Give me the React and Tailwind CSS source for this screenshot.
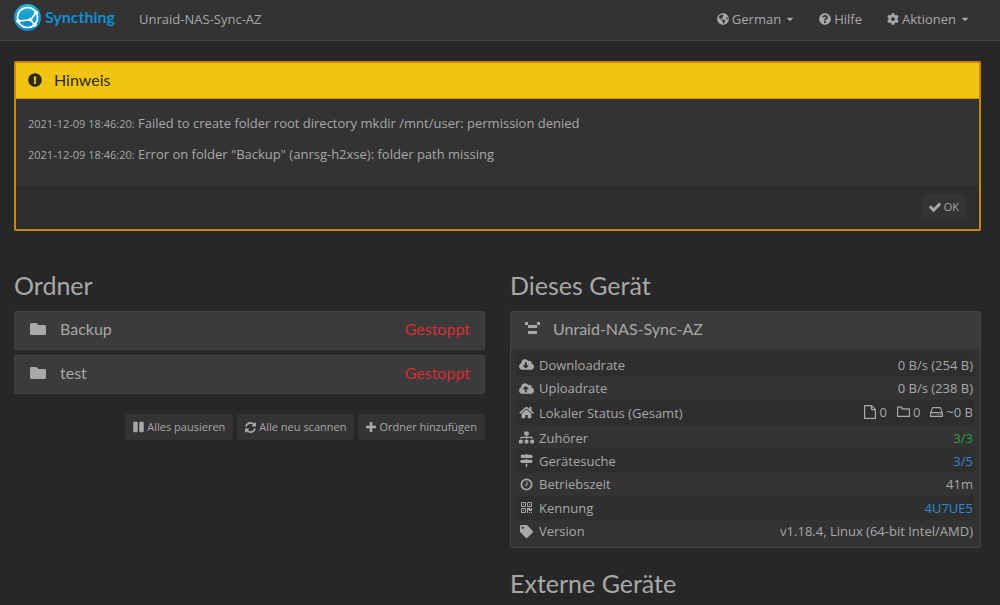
import {
  FaCaretDown,
  FaCloudDownloadAlt,
  FaCloudUploadAlt,
  FaCog,
  FaExclamationCircle,
  FaFolder,
  FaGlobeAmericas,
  FaHome,
  FaMapSigns,
  FaPause,
  FaQuestionCircle,
  FaSitemap,
  FaTag,
} from 'react-icons/fa';

const notices = [
  { time: '2021-12-09 18:46:20:', text: 'Failed to create folder root directory mkdir /mnt/user: permission denied' },
  { time: '2021-12-09 18:46:20:', text: 'Error on folder "Backup" (anrsg-h2xse): folder path missing' },
];

const folders = [
  { name: 'Backup', status: 'Gestoppt' },
  { name: 'test', status: 'Gestoppt' },
];

const deviceRows = [
  { icon: FaCloudDownloadAlt, label: 'Downloadrate', value: '0 B/s (254 B)' },
  { icon: FaCloudUploadAlt, label: 'Uploadrate', value: '0 B/s (238 B)' },
  { icon: FaHome, label: 'Lokaler Status (Gesamt)', value: <LocalState /> },
  { icon: FaSitemap, label: 'Zuhörer', value: <span className="text-[#29a745]">3/3</span> },
  { icon: FaMapSigns, label: 'Gerätesuche', value: <a href="#discovery" className="text-[#3089d6]">3/5</a> },
  { icon: ClockIcon, label: 'Betriebszeit', value: '41m' },
  { icon: QrIcon, label: 'Kennung', value: <a href="#id" className="text-[#3089d6]">4U7UE5</a> },
  { icon: FaTag, label: 'Version', value: 'v1.18.4, Linux (64-bit Intel/AMD)' },
];

function Logo() {
  return (
    <svg viewBox="0 0 117 117" className="h-[27px] w-[27px]" aria-hidden="true">
      <defs>
        <linearGradient id="logo-bg" x1="0" y1="1" x2="0" y2="0">
          <stop offset="0" stopColor="#0882c8" />
          <stop offset="1" stopColor="#26b6db" />
        </linearGradient>
      </defs>
      <circle cx="58.5" cy="58.5" r="58.5" fill="url(#logo-bg)" />
      <g fill="none" stroke="#fff" strokeWidth="7">
        <circle cx="58.5" cy="58.5" r="43.5" />
        <path d="M72 68 L95 38 M72 68 L18 74 M72 68 L90 91" />
      </g>
      <g fill="#fff">
        <circle cx="72" cy="68" r="8" />
        <circle cx="96" cy="38" r="9" />
        <circle cx="18" cy="74" r="9" />
        <circle cx="90" cy="90" r="9" />
      </g>
    </svg>
  );
}

function CheckIcon() {
  return (
    <svg viewBox="121 246 1550 1276" className="h-[10px] w-[12px]" fill="currentColor" aria-hidden="true">
      <path d="M1671 566q0 40-28 68l-724 724-136 136q-28 28-68 28t-68-28l-136-136-362-362q-28-28-28-68t28-68l136-136q28-28 68-28t68 28l294 295 656-657q28-28 68-28t68 28l136 136q28 28 28 68z" />
    </svg>
  );
}

function PlusIcon() {
  return (
    <svg viewBox="192 128 1408 1408" className="h-[10px] w-[10px]" fill="currentColor" aria-hidden="true">
      <path d="M1600 736v192q0 40-28 68t-68 28h-416v416q0 40-28 68t-68 28h-192q-40 0-68-28t-28-68v-416h-416q-40 0-68-28t-28-68v-192q0-40 28-68t68-28h416v-416q0-40 28-68t68-28h192q40 0 68 28t28 68v416h416q40 0 68 28t28 68z" />
    </svg>
  );
}

function RefreshIcon() {
  return (
    <svg viewBox="0 0 1536 1536" className="h-[11px] w-[11px]" fill="currentColor" aria-hidden="true">
      <path d="M1511 928q0 5-1 7-64 268-268 434.500T764 1536q-146 0-282.500-55T238 1324l-129 129q-19 19-45 19t-45-19-19-45V960q0-26 19-45t45-19h448q26 0 45 19t19 45-19 45l-137 137q71 66 161 102t187 36q134 0 250-65t186-179q11-17 53-117 8-23 30-23h192q13 0 22.500 9.500t9.500 22.500zm25-800v448q0 26-19 45t-45 19h-448q-26 0-45-19t-19-45 19-45l138-138Q969 256 768 256q-134 0-250 65T332 500q-11 17-53 117-8 23-30 23H50q-13 0-22.500-9.500T18 608v-7q65-268 270-434.500T768 0q146 0 284 55.500T1297 212l130-129q19-19 45-19t45 19 19 45z" />
    </svg>
  );
}

function ClockIcon({ className }) {
  return (
    <svg viewBox="0 0 14 14" className={className} fill="none" stroke="currentColor" aria-hidden="true">
      <circle cx="7" cy="7" r="5.500" strokeWidth="1.900" />
      <path d="M7.500 4v3.500H5" strokeWidth="1.200" />
    </svg>
  );
}

function QrIcon({ className }) {
  return (
    <svg viewBox="0 0 13 13" className={className} aria-hidden="true">
      <path d="M1.500 1.500h4v4h-4zM7.500 1.500h4v4h-4zM1.500 7.500h4v4h-4z" fill="none" stroke="currentColor" />
      <path d="M3 3h1v1H3zM9 3h1v1H9zM3 9h1v1H3zM7 7h3v1h1V7h1v3H9V9H8v3H7zM9 11h1v1H9zM11 11h1v1h-1z" fill="currentColor" />
    </svg>
  );
}

function FileIcon() {
  return (
    <svg viewBox="0 0 12 14" className="h-[14px] w-[12px]" fill="none" stroke="currentColor" strokeWidth="1.200" strokeLinejoin="round" aria-hidden="true">
      <path d="M.6.6h7L11.400 4.400v9H.6zM7.500.6v4h3.900" />
    </svg>
  );
}

function FolderIcon() {
  return (
    <svg viewBox="0 0 13 12" className="h-[12px] w-[13px]" fill="none" stroke="currentColor" strokeWidth="1.200" strokeLinejoin="round" aria-hidden="true">
      <path d="M.6 1.200h4.200v1.600h7.600v7.600H.6z" />
    </svg>
  );
}

function DiskIcon() {
  return (
    <svg viewBox="0 0 13 12" className="h-[12px] w-[13px]" fill="none" stroke="currentColor" strokeWidth="1.200" strokeLinejoin="round" aria-hidden="true">
      <path d="M.6 6.600 2.600 1.600h7.800l2 5v3.800H.6zM.6 6.600h11.800M7.500 8.500h1M9.800 8.500h1" />
    </svg>
  );
}

// Small pixel figure shown in front of the device name
function Identicon() {
  return (
    <svg viewBox="0 0 5 5" className="h-[15px] w-[15px]" fill="currentColor" shapeRendering="crispEdges" aria-hidden="true">
      <path d="M0 0h1v1H0zM4 0h1v1H4zM1 1h3v1H1zM1 3h3v1H1z" />
    </svg>
  );
}

function LocalState() {
  return (
    <span className="inline-flex items-center gap-[10px]">
      <span className="flex items-center gap-[3px]"><FileIcon />0</span>
      <span className="flex items-center gap-[3px]"><FolderIcon />0</span>
      <span className="flex items-center gap-[3px]"><DiskIcon />~0 B</span>
    </span>
  );
}

function SmallButton({ icon, children }) {
  return (
    <button type="button" className="flex h-[26px] items-center gap-[3px] rounded-[3px] bg-[#333333] px-2 text-[11px]">
      {icon}
      {children}
    </button>
  );
}

function Navbar() {
  return (
    <nav className="flex h-[41px] items-center border-b border-[#424242] bg-[#333333] pr-[31px] pb-[2px] pl-[14px]">
      <a href="#home" className="flex items-center gap-1 pb-[4px] font-[Lato,sans-serif] text-[16px] font-bold text-[#0f8fd0]">
        <Logo />
        Syncthing
      </a>
      <p className="ml-[24px]">Unraid-NAS-Sync-AZ</p>
      <div className="ml-auto flex items-center gap-[25px]">
        <button type="button" className="flex items-center gap-[3px]">
          <FaGlobeAmericas className="h-[12px] w-[12px]" />
          German
          <FaCaretDown className="ml-[2px] h-[10px] w-[8px]" />
        </button>
        <a href="#help" className="flex items-center gap-[3px]">
          <FaQuestionCircle className="h-[12px] w-[12px]" />
          Hilfe
        </a>
        <button type="button" className="flex items-center gap-[3px]">
          <FaCog className="h-[12px] w-[12px]" />
          Aktionen
          <FaCaretDown className="ml-[2px] h-[10px] w-[8px]" />
        </button>
      </div>
    </nav>
  );
}

function Notice() {
  return (
    <section className="rounded-[2px] border-2 border-[#cb850f] bg-[#333333]">
      <h3 className="flex h-[36px] items-center gap-[12px] border-b border-[#d8940f] bg-[#f1c40f] px-3 pb-[2px] font-[Lato,sans-serif] text-[16px] text-[#2b2b20]">
        <FaExclamationCircle className="h-[14px] w-[14px]" />
        Hinweis
      </h3>
      <div className="flex flex-col gap-[11px] px-3 pt-[14px] pb-[22px]">
        {notices.map((n) => (
          <p key={n.text} className="leading-[20px]">
            <span className="text-[11px] leading-none">{n.time}</span> {n.text}
          </p>
        ))}
      </div>
      <div className="flex justify-end bg-[#2d2d2d] px-3 pt-2 pb-[9px]">
        <SmallButton icon={<CheckIcon />}>OK</SmallButton>
      </div>
    </section>
  );
}

function Folders() {
  return (
    <section>
      <h2 className="font-[Lato,sans-serif] text-[25px] leading-[26px]">Ordner</h2>
      <ul className="mt-[13px] flex flex-col gap-[5px]">
        {folders.map((f) => (
          <li key={f.name}>
            <button type="button" className="flex h-[39px] w-full items-center rounded-[2px] border border-[#444444] bg-[#3b3b3b] px-[14px] pb-[3px] font-[Lato,sans-serif] text-[16px]">
              <FaFolder className="mr-[14px] ml-[1px] h-[16px] w-[16px]" />
              {f.name}
              <span className="ml-auto text-[#d82c36]">{f.status}</span>
            </button>
          </li>
        ))}
      </ul>
      <div className="mt-5 flex justify-end gap-1">
        <SmallButton icon={<FaPause className="h-[12px] w-[11px]" />}>Alles pausieren</SmallButton>
        <SmallButton icon={<RefreshIcon />}>Alle neu scannen</SmallButton>
        <SmallButton icon={<PlusIcon />}>Ordner hinzufügen</SmallButton>
      </div>
    </section>
  );
}

function ThisDevice() {
  return (
    <section>
      <h2 className="font-[Lato,sans-serif] text-[25px] leading-[26px]">Dieses Gerät</h2>
      <div className="mt-[13px] rounded-[2px] border border-[#444444] bg-[#333333]">
        <h3 className="flex h-[37px] items-center gap-[13px] border-b border-[#3e3e3e] bg-[#3b3b3b] px-[14px] pb-[2px] font-[Lato,sans-serif] text-[16px]">
          <Identicon />
          Unraid-NAS-Sync-AZ
        </h3>
        <div className="px-[5px] pt-[4px] pb-[4px]">
          <table className="h-[190px] w-full">
            <tbody>
              {deviceRows.map(({ icon: Icon, label, value }) => (
                <tr key={label} className="odd:bg-[#2e2e2e]">
                  <th scope="row" className="px-[3px] py-0 text-left font-normal">
                    <span className="flex items-center gap-[5px]">
                      <Icon className="h-[13px] w-[15px]" />
                      {label}
                    </span>
                  </th>
                  <td className="px-[2px] py-0 text-right">{value}</td>
                </tr>
              ))}
            </tbody>
          </table>
        </div>
      </div>
    </section>
  );
}

export default function App() {
  return (
    <div className="min-h-screen bg-[#272727] font-['Open_Sans',sans-serif] text-[13px] leading-[18px] text-[#a8a8a8]">
      <Navbar />
      <main className="pt-5 pr-[19px] pl-[14px]">
        <Notice />
        <div className="mt-[41px] grid grid-cols-2 gap-[25px]">
          <Folders />
          <div className="flex flex-col gap-[22px]">
            <ThisDevice />
            <h2 className="font-[Lato,sans-serif] text-[25px] leading-[26px]">Externe Geräte</h2>
          </div>
        </div>
      </main>
    </div>
  );
}
